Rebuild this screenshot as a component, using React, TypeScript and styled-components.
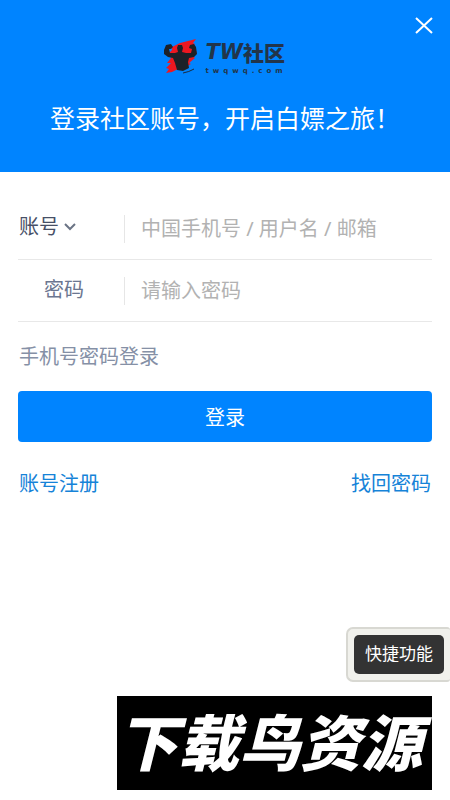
import React from "react";
import styled, { createGlobalStyle } from "styled-components";

const GlobalStyle = createGlobalStyle`
  * { box-sizing: border-box; }
  body {
    margin: 0;
    background: #fff;
    font-family: "Noto Sans CJK SC", "Noto Sans", sans-serif;
    font-size: 20px;
    line-height: 30px;
  }
  button, input, select { font: inherit; }
`;

const Page = styled.div`
  min-height: 100vh;
  display: flex;
  flex-direction: column;
`;

const Header = styled.header`
  position: relative;
  display: flex;
  flex-direction: column;
  align-items: center;
  padding: 34px 16px 36px;
  background: #0084ff;
`;

const CloseButton = styled.button`
  position: absolute;
  top: 12px;
  right: 12px;
  width: 28px;
  height: 28px;
  padding: 0;
  border: 0;
  background: none;
  color: #fff;
  cursor: pointer;
  svg { display: block; }
`;

const Brand = styled.div`
  display: flex;
  align-items: center;
  gap: 4px;
  height: 44px;
  color: #22354a;
`;

const BrandText = styled.div`
  display: flex;
  flex-direction: column;
  padding-top: 6px;
`;

const BrandName = styled.span`
  display: flex;
  align-items: center;
  font-size: 21px;
  font-weight: 900;
  line-height: 24px;
`;

const BrandLatin = styled.span`
  font-family: "DejaVu Sans", sans-serif;
  font-size: 21px;
  font-weight: 700;
  font-style: italic;
  line-height: 24px;
`;

const BrandDomain = styled.span`
  font-family: "DejaVu Sans", sans-serif;
  font-size: 7px;
  font-weight: 700;
  line-height: 14px;
  letter-spacing: 4px;
`;

const Title = styled.h1`
  margin: 20px 0 0;
  font-size: 25px;
  font-weight: 400;
  line-height: 38px;
  color: #fff;
  white-space: nowrap;
`;

const Form = styled.form`
  padding: 26px 18px 0;
`;

const FieldRow = styled.div`
  display: grid;
  grid-template-columns: 106px 1fr;
  align-items: center;
  height: 62px;
  border-bottom: 1px solid #e8e8e8;
`;

const AccountType = styled.div`
  display: flex;
  align-items: center;
  color: #475067;
  padding-bottom: 6px;
`;

const TypeSelect = styled.select`
  appearance: none;
  width: 64px;
  height: 30px;
  margin-right: -18px;
  padding: 0 18px 0 1px;
  border: 0;
  background: none;
  color: inherit;
  line-height: 30px;
`;

const Chevron = styled.svg`
  margin-top: 2px;
  pointer-events: none;
`;

const FieldLabel = styled.label`
  padding: 0 0 4px 26px;
  color: #6b7690;
`;

const TextInput = styled.input`
  width: 100%;
  min-width: 0;
  height: 28px;
  padding: 0 0 0 16px;
  border: 0;
  border-left: 1px solid #e6e6e6;
  outline: 0;
  background: none;
  color: #475067;
  font-family: "Noto Sans", "Noto Sans CJK SC", sans-serif;
  &::placeholder { color: #b2b2b2; opacity: 1; }
`;

const ModeButton = styled.button`
  display: block;
  margin-top: 19px;
  padding: 0 1px;
  border: 0;
  background: none;
  color: #8590a6;
  cursor: pointer;
`;

const SubmitButton = styled.button`
  width: 100%;
  height: 51px;
  margin-top: 20px;
  padding: 0;
  border: 0;
  border-radius: 4px;
  background: #0084ff;
  color: #fff;
  cursor: pointer;
`;

const LinkRow = styled.nav`
  display: flex;
  justify-content: space-between;
  margin-top: 26px;
  padding: 0 1px;
`;

const TextLink = styled.a`
  color: #1683d8;
  text-decoration: none;
`;

const BottomArea = styled.footer`
  display: flex;
  flex-direction: column;
  align-items: flex-end;
  gap: 14px;
  margin-top: auto;
  padding: 24px 0 10px;
`;

const QuickPanel = styled.div`
  padding: 6px;
  border: 2px solid #d8d8d2;
  border-right: 0;
  border-radius: 7px 3px 3px 7px;
  background: #f1f1ec;
`;

const QuickButton = styled.button`
  display: block;
  height: 39px;
  padding: 0 11px 3px;
  border: 0;
  border-radius: 5px;
  background: #333;
  color: #fff;
  font-size: 17px;
  line-height: 24px;
  cursor: pointer;
`;

const Banner = styled.div`
  display: flex;
  align-items: center;
  justify-content: center;
  height: 94px;
  margin-right: 18px;
  padding: 0 10px 6px 0;
  background: #000;
  color: #fff;
  font-size: 61px;
  font-weight: 900;
  font-style: italic;
  line-height: 88px;
  white-space: nowrap;
`;

function BrandMark() {
  return (
    <svg width="38" height="42" viewBox="0 0 38 42" aria-hidden="true">
      <path
        fill="#ed1720"
        d="M9 12 17 8 33 4 30 8 32 9 28 13 34 17 29 21 32 23 26 28 28 29 22 32 15 34 9 37 3 38 6 34 3 33 8 28 4 28 8 23 6 18 9 15Z"
      />
      <path
        fill="#1c2128"
        d="M3 10 8 9 10 12 8 14 6 14 7 18 12 18 15 17 14 13 15 10 19 10 20 13 19 17 23 18 28 18 29 14 26 13 27 10 31 9 33 12 34 19 31 22 26 23 25 27 26 33 20 36 14 35 12 28 10 23 5 22 1 19 1 15Z"
      />
      <path fill="none" stroke="#1c2a40" d="M20 38Q26 37 31 34" />
    </svg>
  );
}

export default function App() {
  return (
    <>
      <GlobalStyle />
      <Page>
        <Header>
          <CloseButton type="button" aria-label="关闭">
            <svg width="28" height="28" viewBox="0 0 28 28" fill="none" stroke="currentColor" strokeWidth="2">
              <path d="M6 6 22 21M22 6 6 21" />
            </svg>
          </CloseButton>
          <Brand>
            <BrandMark />
            <BrandText>
              <BrandName>
                <BrandLatin>TW</BrandLatin>社区
              </BrandName>
              <BrandDomain>twqwq.com</BrandDomain>
            </BrandText>
          </Brand>
          <Title>登录社区账号，开启白嫖之旅！</Title>
        </Header>

        <Form onSubmit={(e: React.FormEvent) => e.preventDefault()}>
          <FieldRow>
            <AccountType>
              <TypeSelect aria-label="登录方式">
                <option>账号</option>
              </TypeSelect>
              <Chevron width="12" height="8" viewBox="0 0 12 8" fill="none" stroke="#6b7485" strokeWidth="2">
                <path d="M1 1 6 6 11 1" />
              </Chevron>
            </AccountType>
            <TextInput type="text" aria-label="账号" placeholder="中国手机号 / 用户名 / 邮箱" />
          </FieldRow>
          <FieldRow>
            <FieldLabel htmlFor="password">密码</FieldLabel>
            <TextInput id="password" type="password" placeholder="请输入密码" />
          </FieldRow>
          <ModeButton type="button">手机号密码登录</ModeButton>
          <SubmitButton type="submit">登录</SubmitButton>
          <LinkRow>
            <TextLink href="#register">账号注册</TextLink>
            <TextLink href="#recover">找回密码</TextLink>
          </LinkRow>
        </Form>

        <BottomArea>
          <QuickPanel>
            <QuickButton type="button">快捷功能</QuickButton>
          </QuickPanel>
          <Banner>下载鸟资源</Banner>
        </BottomArea>
      </Page>
    </>
  );
}
